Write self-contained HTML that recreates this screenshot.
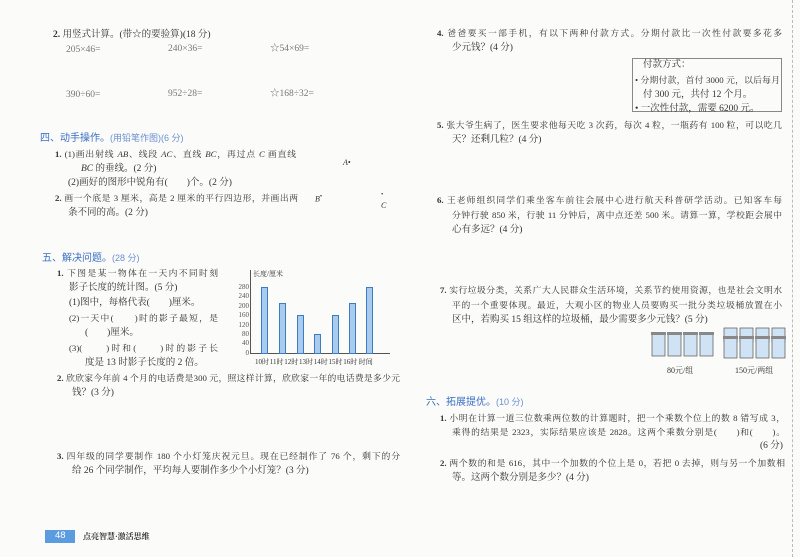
<!DOCTYPE html>
<html><head><meta charset="utf-8"><style>
body{margin:0;width:800px;height:557px;background:#fbfbfa;position:relative;overflow:hidden;font-family:"Liberation Serif","Noto Serif CJK SC",serif;color:#333}
.l{position:absolute;white-space:nowrap;font-size:9.5px;line-height:12px}
.j{white-space:normal;font-size:8.8px;height:12px;overflow:visible;text-align:justify;text-align-last:justify}
.g{color:#777}
.h{color:#3a6fc4;font-family:"Liberation Sans","Noto Sans CJK SC",sans-serif;font-size:10px}
.h span{color:#6b8fd0;font-size:9px}
b{font-weight:bold}
.bar{position:absolute;width:7px;background:#a9cbee;border:1px solid #3d7cc0;box-sizing:border-box}
</style></head><body>
<div class="l" style="left:53px;top:29px"><b>2.</b> 用竖式计算。(带☆的要验算)(18 分)</div>
<div class="l g" style="left:66px;top:44px">205×46=</div>
<div class="l g" style="left:168px;top:43px">240×36=</div>
<div class="l g" style="left:270px;top:43px">☆54×69=</div>
<div class="l g" style="left:66px;top:89px">390÷60=</div>
<div class="l g" style="left:168px;top:88px">952÷28=</div>
<div class="l g" style="left:270px;top:88px">☆168÷32=</div>

<div class="l h" style="left:40px;top:132px">四、动手操作。<span>(用铅笔作图)(6 分)</span></div>
<div class="l j" style="left:55px;top:148px;width:241px"><b>1.</b> (1)画出射线 <i>AB</i>、线段 <i>AC</i>、直线 <i>BC</i>，再过点 <i>C</i> 画直线</div>
<div class="l" style="left:81px;top:163px"><i>BC</i> 的垂线。(2 分)</div>
<div class="l" style="left:68px;top:177px">(2)画好的图形中锐角有(　　)个。(2 分)</div>
<div class="l j" style="left:55px;top:192px;width:243px"><b>2.</b> 画一个底是 3 厘米，高是 2 厘米的平行四边形，并画出两</div>
<div class="l" style="left:68px;top:207px">条不同的高。(2 分)</div>
<div class="l" style="left:343px;top:157px;font-size:8px"><i>A</i>•</div>
<div class="l" style="left:315px;top:191px;font-size:8px"><i>B</i><sup>•</sup></div>
<div class="l" style="left:381px;top:189px;font-size:8px"><sup>•</sup><br><i style="position:relative;top:-4px">C</i></div>

<div class="l h" style="left:42px;top:252px">五、解决问题。<span>(28 分)</span></div>
<div class="l j" style="left:57px;top:267px;width:161px"><b>1.</b> 下图是某一物体在一天内不同时刻</div>
<div class="l" style="left:69px;top:282px">影子长度的统计图。(5 分)</div>
<div class="l" style="left:69px;top:297px">(1)图中，每格代表(　　)厘米。</div>
<div class="l j" style="left:69px;top:312px;width:149px">(2)一天中(　　)时的影子最短，是</div>
<div class="l" style="left:85px;top:327px">(　　)厘米。</div>
<div class="l j" style="left:69px;top:342px;width:149px">(3)(　　)时和(　　)时的影子长</div>
<div class="l" style="left:85px;top:357px">度是 13 时影子长度的 2 倍。</div>

<div style="position:absolute;left:250px;top:270px;width:1px;height:84px;background:#555"></div>
<div style="position:absolute;left:250px;top:353px;width:140px;height:1px;background:#555"></div>
<div class="l" style="left:253px;top:268px;font-size:7px">长度/厘米</div>
<div style="position:absolute;left:235px;top:283px;font-size:7px;line-height:9.4px;text-align:right;width:14px;color:#555">280<br>240<br>200<br>160<br>120<br>80<br>40<br>0</div>
<div class="bar" style="left:261px;top:287px;height:67px"></div>
<div class="bar" style="left:279px;top:303px;height:51px"></div>
<div class="bar" style="left:297px;top:315px;height:39px"></div>
<div class="bar" style="left:314px;top:334px;height:20px"></div>
<div class="bar" style="left:332px;top:315px;height:39px"></div>
<div class="bar" style="left:349px;top:303px;height:51px"></div>
<div class="bar" style="left:366px;top:287px;height:67px"></div>
<div class="l" style="left:255px;top:356px;font-size:7px;word-spacing:-1px">10时 11时 12时 13时 14时 15时 16时 &nbsp;时间</div>

<div class="l j" style="left:57px;top:372px;width:343px"><b>2.</b> 欣欣家今年前 4 个月的电话费是300 元，照这样计算，欣欣家一年的电话费是多少元</div>
<div class="l" style="left:72px;top:387px">钱？(3 分)</div>
<div class="l j" style="left:57px;top:450px;width:343px"><b>3.</b> 四年级的同学要制作 180 个小灯笼庆祝元旦。现在已经制作了 76 个，剩下的分</div>
<div class="l" style="left:72px;top:465px">给 26 个同学制作，平均每人要制作多少个小灯笼？(3 分)</div>

<div style="position:absolute;left:45px;top:530px;width:30px;height:13px;background:#5b9be0"></div>
<div class="l" style="left:55px;top:530px;color:#fff;font-family:'Liberation Sans',sans-serif">48</div>
<div class="l" style="left:83px;top:531px;font-size:8px;font-weight:bold">点亮智慧·激活思维</div>

<div class="l j" style="left:437px;top:27px;width:345px"><b>4.</b> 爸爸要买一部手机，有以下两种付款方式。分期付款比一次性付款要多花多</div>
<div class="l" style="left:452px;top:42px">少元钱？(4 分)</div>
<div style="position:absolute;left:632px;top:58px;width:150px;height:54px;border:1px solid #888;box-sizing:border-box"></div>
<div class="l" style="left:643px;top:59px">付款方式：</div>
<div class="l j" style="left:635px;top:74px;width:145px">• 分期付款，首付 3000 元，以后每月</div>
<div class="l" style="left:643px;top:89px">付 300 元，共付 12 个月。</div>
<div class="l" style="left:635px;top:103px">• 一次性付款，需要 6200 元。</div>
<div class="l j" style="left:437px;top:119px;width:345px"><b>5.</b> 张大爷生病了，医生要求他每天吃 3 次药，每次 4 粒，一瓶药有 100 粒，可以吃几</div>
<div class="l" style="left:452px;top:134px">天？还剩几粒？(4 分)</div>
<div class="l j" style="left:437px;top:194px;width:345px"><b>6.</b> 王老师组织同学们乘坐客车前往会展中心进行航天科普研学活动。已知客车每</div>
<div class="l j" style="left:452px;top:209px;width:330px">分钟行驶 850 米，行驶 11 分钟后，离中点还差 500 米。请算一算，学校距会展中</div>
<div class="l" style="left:452px;top:224px">心有多远？(4 分)</div>
<div class="l j" style="left:440px;top:284px;width:342px"><b>7.</b> 实行垃圾分类，关系广大人民群众生活环境，关系节约使用资源，也是社会文明水</div>
<div class="l j" style="left:452px;top:299px;width:330px">平的一个重要体现。最近，大观小区的物业人员要购买一批分类垃圾桶放置在小</div>
<div class="l" style="left:452px;top:314px">区中，若购买 15 组这样的垃圾桶，最少需要多少元钱？(5 分)</div>

<svg style="position:absolute;left:648px;top:326px" width="142" height="38">
<g fill="#cfe3f5" stroke="#555" stroke-width="0.7">
<rect x="4" y="8" width="13" height="22"/><rect x="20" y="8" width="13" height="22"/><rect x="36" y="8" width="13" height="22"/><rect x="52" y="8" width="13" height="22"/>
<rect x="76" y="2" width="13" height="14"/><rect x="92" y="2" width="13" height="14"/><rect x="108" y="2" width="13" height="14"/><rect x="124" y="2" width="13" height="14"/>
<rect x="76" y="12" width="13" height="20"/><rect x="92" y="12" width="13" height="20"/><rect x="108" y="12" width="13" height="20"/><rect x="124" y="12" width="13" height="20"/>
</g>
<g fill="#888"><rect x="3" y="6" width="15" height="3"/><rect x="19" y="6" width="15" height="3"/><rect x="35" y="6" width="15" height="3"/><rect x="51" y="6" width="15" height="3"/>
<rect x="75" y="10" width="15" height="3"/><rect x="91" y="10" width="15" height="3"/><rect x="107" y="10" width="15" height="3"/><rect x="123" y="10" width="15" height="3"/></g>
</svg>
<div class="l" style="left:667px;top:365px;font-size:8px">80元/组</div>
<div class="l" style="left:735px;top:365px;font-size:8px">150元/两组</div>

<div class="l h" style="left:426px;top:396px">六、拓展提优。<span>(10 分)</span></div>
<div class="l j" style="left:440px;top:412px;width:345px"><b>1.</b> 小明在计算一道三位数乘两位数的计算题时，把一个乘数个位上的数 8 错写成 3，</div>
<div class="l j" style="left:452px;top:426px;width:333px">乘得的结果是 2323，实际结果应该是 2828。这两个乘数分别是(　　)和(　　)。</div>
<div class="l" style="left:760px;top:440px">(6 分)</div>
<div class="l j" style="left:440px;top:457px;width:345px"><b>2.</b> 两个数的和是 616，其中一个加数的个位上是 0，若把 0 去掉，则与另一个加数相</div>
<div class="l" style="left:452px;top:472px">等。这两个数分别是多少？(4 分)</div>

<div style="position:absolute;left:792px;top:0;width:0;height:557px;border-left:1px dashed #bbb"></div>
</body></html>
